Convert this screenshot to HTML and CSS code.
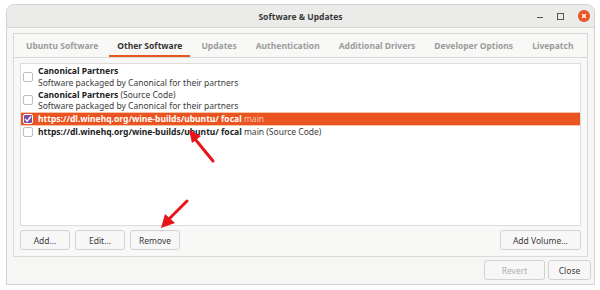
FILE: index.html
```html
<!DOCTYPE html>
<html lang="en">
<head>
    <meta charset="UTF-8">
    <title>Software &amp; Updates</title>
    <link rel="stylesheet" href="styles.css">
</head>
<body>

    <div class="window">
        <!-- Title bar -->
        <div class="titlebar">
            <span class="title">Software &amp; Updates</span>
            <div class="controls">
                <span class="min"></span>
                <span class="max"></span>
                <span class="close">
                    <svg width="12" height="12" viewBox="0 0 12 12">
                        <circle cx="6" cy="6" r="6" fill="#e95420"/>
                        <path d="M4 4 L8 8 M8 4 L4 8" stroke="#fff" stroke-width="1.3"/>
                    </svg>
                </span>
            </div>
        </div>

        <div class="content">
            <div class="notebook">
                <div class="tabs">
                    <span class="tab">Ubuntu Software</span>
                    <span class="tab active">Other Software</span>
                    <span class="tab">Updates</span>
                    <span class="tab">Authentication</span>
                    <span class="tab">Additional Drivers</span>
                    <span class="tab">Developer Options</span>
                    <span class="tab">Livepatch</span>
                </div>

                <div class="page">
                    <div class="list">
                        <div class="row">
                            <span class="check"></span>
                            <div>
                                <div><b>Canonical Partners</b></div>
                                <div>Software packaged by Canonical for their partners</div>
                            </div>
                        </div>
                        <div class="row">
                            <span class="check"></span>
                            <div>
                                <div><b>Canonical Partners</b> (Source Code)</div>
                                <div>Software packaged by Canonical for their partners</div>
                            </div>
                        </div>
                        <div class="row selected">
                            <span class="check checked">
                                <svg width="8" height="8" viewBox="0 0 8 8">
                                    <path d="M1 4 L3.2 6.2 L7 1.5" stroke="#fff" stroke-width="1.4" fill="none"/>
                                </svg>
                            </span>
                            <div><b>https://dl.winehq.org/wine-builds/ubuntu/ focal</b> <span class="dim">main</span></div>
                        </div>
                        <div class="row">
                            <span class="check"></span>
                            <div><b>https://dl.winehq.org/wine-builds/ubuntu/ focal</b> main (Source Code)</div>
                        </div>
                    </div>

                    <div class="buttons">
                        <button>Add...</button>
                        <button>Edit...</button>
                        <button>Remove</button>
                        <button class="push">Add Volume...</button>
                    </div>
                </div>
            </div>

            <div class="actions">
                <button class="disabled">Revert</button>
                <button>Close</button>
            </div>
        </div>
    </div>

    <!-- red annotation arrows -->
    <svg class="arrow arrow1" width="40" height="45" viewBox="0 0 40 45">
        <path d="M32 37 L14 15" stroke="#e8141a" stroke-width="3" stroke-linecap="round"/>
        <path d="M8 6 L20 12 L11 19 Z" fill="#e8141a"/>
    </svg>
    <svg class="arrow arrow2" width="36" height="36" viewBox="0 0 36 36">
        <path d="M30 4 L12 22" stroke="#e8141a" stroke-width="3" stroke-linecap="round"/>
        <path d="M4 31 L8 17 L18 26 Z" fill="#e8141a"/>
    </svg>

</body>
</html>
```

FILE: styles.css
```css
body {
    margin: 0;
    background: #fff;
    font-family: "Noto Sans", "DejaVu Sans", sans-serif;
    font-size: 8.5px;
    color: #3c3c3c;
    position: relative;
}
.window {
    margin: 4px 0 0 6px;
    width: 587px;
    height: 279px;
    border: 1px solid #d3d3d3;
    border-radius: 8px 8px 0 0;
    background: #f6f6f5;
    display: flex;
    flex-direction: column;
}
.titlebar {
    height: 22px;
    background: #ebebea;
    border-bottom: 1px solid #d6d6d6;
    border-radius: 8px 8px 0 0;
    display: flex;
    align-items: center;
    justify-content: center;
    position: relative;
}
.title {
    font-weight: bold;
    color: #3a3a3a;
}
.controls {
    position: absolute;
    right: 4px;
    top: 5px;
    display: flex;
    align-items: center;
    gap: 14px;
}
.min {
    width: 6px;
    height: 1px;
    background: #555;
    margin-top: 3px;
}
.max {
    width: 5px;
    height: 5px;
    border: 1px solid #555;
}
.close {
    display: flex;
}
.content {
    flex: 1;
    padding: 5px 6px 4px 6px;
    display: flex;
    flex-direction: column;
}
.notebook {
    border: 1px solid #d9d9d9;
    background: #f8f8f7;
    height: 222px;
    display: flex;
    flex-direction: column;
}
.tabs {
    height: 23px;
    flex: none;
    border-bottom: 1px solid #d9d9d9;
    display: flex;
    align-items: stretch;
    padding-left: 4px;
    gap: 3px;
}
.tab {
    display: flex;
    align-items: center;
    padding: 0 8px;
    white-space: nowrap;
    font-weight: bold;
    color: #9c9c9c;
}
.tab.active {
    color: #333;
    box-shadow: inset 0 -2px 0 #e95420;
}
.page {
    flex: 1;
    padding: 5px 6px 6px 6px;
    display: flex;
    flex-direction: column;
    gap: 4px;
}
.list {
    height: 160px;
    flex: none;
    background: #fff;
    border: 1px solid #dcdcdc;
    padding-top: 1px;
}
.row {
    display: flex;
    align-items: center;
    gap: 5px;
    padding-left: 2px;
    line-height: 11.8px;
    white-space: nowrap;
    color: #3c3c3c;
}
.row b {
    color: #222;
}
.check {
    width: 8px;
    height: 8px;
    border: 1px solid #bdbdbd;
    border-radius: 2px;
    background: #fff;
    flex: none;
    display: flex;
    align-items: center;
    justify-content: center;
}
.row.selected {
    background: #e95420;
    color: #fff;
    height: 12px;
    border-top: 1px solid #f7c3a6;
    border-bottom: 1px solid #f7c3a6;
}
.row.selected b {
    color: #fff;
}
.row.selected .check {
    background: #7a4aa8;
    border-color: #fff;
}
.row.selected .dim {
    color: #f8c9ae;
}
.buttons {
    display: flex;
    gap: 5px;
}
button {
    font-family: inherit;
    font-size: 8.5px;
    color: #3c3c3c;
    height: 20px;
    width: 50px;
    background: #f7f7f7;
    border: 1px solid #d2d2d2;
    border-radius: 3px;
    padding: 0;
}
.push {
    margin-left: auto;
    width: 81px;
}
.actions {
    margin-top: 3px;
    margin-right: -3px;
    display: flex;
    justify-content: flex-end;
    gap: 3px;
}
.actions button {
    width: 61px;
}
.actions button:last-child {
    width: 43px;
}
.disabled {
    color: #b0b0b0;
}
.arrow {
    position: absolute;
}
.arrow1 {
    left: 181px;
    top: 124px;
}
.arrow2 {
    left: 157px;
    top: 197px;
}
```
